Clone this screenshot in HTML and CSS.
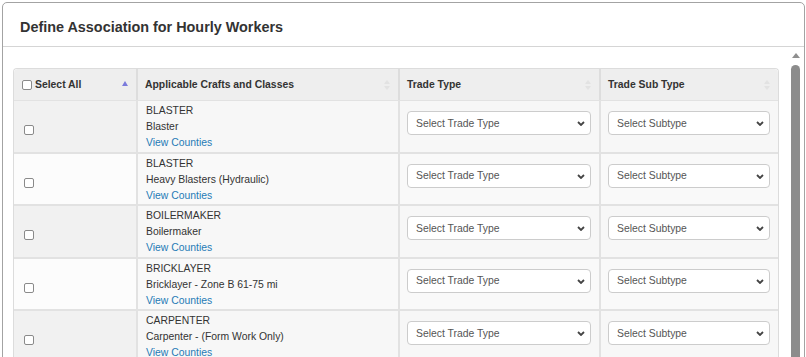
FILE: index.html
```html
<!DOCTYPE html>
<html lang="en">
<head>
<meta charset="utf-8">
<title>Define Association for Hourly Workers</title>
<link rel="stylesheet" href="styles.css">
</head>
<body>
<div class="modal">
  <div class="modal-header">
    <h4 class="modal-title">Define Association for Hourly Workers</h4>
  </div>
  <div class="modal-body">
    <div class="table-wrap">
      <table class="grid">
        <colgroup>
          <col class="c1"><col class="c2"><col class="c3"><col class="c4">
        </colgroup>
        <thead>
          <tr>
            <th><div class="th-inner"><label class="sel-all"><input type="checkbox" class="cb"> Select All</label><span class="sort-asc"></span></div></th>
            <th><div class="th-inner"><span>Applicable Crafts and Classes</span><span class="sort-both"><i class="up"></i><i class="down"></i></span></div></th>
            <th><div class="th-inner"><span>Trade Type</span><span class="sort-both"><i class="up"></i><i class="down"></i></span></div></th>
            <th><div class="th-inner"><span>Trade Sub Type</span><span class="sort-both"><i class="up"></i><i class="down"></i></span></div></th>
          </tr>
        </thead>
        <tbody>
          <tr class="odd">
            <td class="cb-cell"><input type="checkbox" class="cb"></td>
            <td class="craft"><div>BLASTER</div><div>Blaster</div><a href="#">View Counties</a></td>
            <td class="sel-cell"><div class="select"><select><option>Select Trade Type</option></select><svg viewBox="0 0 8 5" width="8" height="5"><path d="M1 1 L4 4 L7 1" fill="none" stroke="#444" stroke-width="1.8"/></svg></div></td>
            <td class="sel-cell"><div class="select"><select><option>Select Subtype</option></select><svg viewBox="0 0 8 5" width="8" height="5"><path d="M1 1 L4 4 L7 1" fill="none" stroke="#444" stroke-width="1.8"/></svg></div></td>
          </tr>
          <tr class="even">
            <td class="cb-cell"><input type="checkbox" class="cb"></td>
            <td class="craft"><div>BLASTER</div><div>Heavy Blasters (Hydraulic)</div><a href="#">View Counties</a></td>
            <td class="sel-cell"><div class="select"><select><option>Select Trade Type</option></select><svg viewBox="0 0 8 5" width="8" height="5"><path d="M1 1 L4 4 L7 1" fill="none" stroke="#444" stroke-width="1.8"/></svg></div></td>
            <td class="sel-cell"><div class="select"><select><option>Select Subtype</option></select><svg viewBox="0 0 8 5" width="8" height="5"><path d="M1 1 L4 4 L7 1" fill="none" stroke="#444" stroke-width="1.8"/></svg></div></td>
          </tr>
          <tr class="odd">
            <td class="cb-cell"><input type="checkbox" class="cb"></td>
            <td class="craft"><div>BOILERMAKER</div><div>Boilermaker</div><a href="#">View Counties</a></td>
            <td class="sel-cell"><div class="select"><select><option>Select Trade Type</option></select><svg viewBox="0 0 8 5" width="8" height="5"><path d="M1 1 L4 4 L7 1" fill="none" stroke="#444" stroke-width="1.8"/></svg></div></td>
            <td class="sel-cell"><div class="select"><select><option>Select Subtype</option></select><svg viewBox="0 0 8 5" width="8" height="5"><path d="M1 1 L4 4 L7 1" fill="none" stroke="#444" stroke-width="1.8"/></svg></div></td>
          </tr>
          <tr class="even">
            <td class="cb-cell"><input type="checkbox" class="cb"></td>
            <td class="craft"><div>BRICKLAYER</div><div>Bricklayer - Zone B 61-75 mi</div><a href="#">View Counties</a></td>
            <td class="sel-cell"><div class="select"><select><option>Select Trade Type</option></select><svg viewBox="0 0 8 5" width="8" height="5"><path d="M1 1 L4 4 L7 1" fill="none" stroke="#444" stroke-width="1.8"/></svg></div></td>
            <td class="sel-cell"><div class="select"><select><option>Select Subtype</option></select><svg viewBox="0 0 8 5" width="8" height="5"><path d="M1 1 L4 4 L7 1" fill="none" stroke="#444" stroke-width="1.8"/></svg></div></td>
          </tr>
          <tr class="odd">
            <td class="cb-cell"><input type="checkbox" class="cb"></td>
            <td class="craft"><div>CARPENTER</div><div>Carpenter - (Form Work Only)</div><a href="#">View Counties</a></td>
            <td class="sel-cell"><div class="select"><select><option>Select Trade Type</option></select><svg viewBox="0 0 8 5" width="8" height="5"><path d="M1 1 L4 4 L7 1" fill="none" stroke="#444" stroke-width="1.8"/></svg></div></td>
            <td class="sel-cell"><div class="select"><select><option>Select Subtype</option></select><svg viewBox="0 0 8 5" width="8" height="5"><path d="M1 1 L4 4 L7 1" fill="none" stroke="#444" stroke-width="1.8"/></svg></div></td>
          </tr>
        </tbody>
      </table>
    </div>
    <div class="vscroll">
      <div class="vs-arrow"></div>
      <div class="vs-thumb"></div>
    </div>
  </div>
</div>
</body>
</html>
```

FILE: styles.css
```css
html, body {
  margin: 0;
  padding: 0;
  height: 100%;
  overflow: hidden;
  background: #fff;
}
body {
  font-family: "Liberation Sans", Arial, sans-serif;
  color: #333;
}
.modal {
  margin: 2px 1px 0 2px;
  border: 1px solid #a3a3a3;
  border-radius: 5px 5px 0 0;
  height: 420px;
  box-sizing: border-box;
  overflow: hidden;
}
.modal-header {
  padding: 14px 17px 9px;
  border-bottom: 1px solid #d5d5d5;
}
.modal-title {
  margin: 0;
  font-size: 14.4px;
  line-height: 20px;
  font-weight: bold;
  color: #333;
}
.modal-body {
  display: flex;
  padding: 0 0 0 10px;
}
.table-wrap {
  flex: 1 1 auto;
  margin-right: 8px;
  padding-top: 21px;
}
.grid {
  width: 100%;
  border-collapse: separate;
  border-spacing: 0;
  table-layout: fixed;
  font-size: 10.4px;
  border: 1px solid #dcdcdc;
  border-bottom: 0;
  border-radius: 4px 4px 0 0;
}
.c1 { width: 122px; }
.c2 { width: 262px; }
.c3 { width: 201px; }
.c4 { width: auto; }
.grid th {
  background: #eeeeee;
  text-align: left;
  font-weight: bold;
  padding: 8px 7px 8px 7px;
  line-height: 15px;
  border-left: 2px solid #dddddd;
  color: #333;
}
.grid th:first-child { border-left: 0; padding-left: 8px; border-top-left-radius: 4px; }
.grid th:last-child { border-top-right-radius: 4px; }
.th-inner {
  display: flex;
  align-items: center;
  justify-content: space-between;
}
.sel-all {
  display: flex;
  align-items: center;
  gap: 3px;
}
.sort-asc {
  width: 0;
  height: 0;
  border-left: 3px solid transparent;
  border-right: 3px solid transparent;
  border-bottom: 5px solid #7b7bdc;
  margin-right: 1px;
  margin-top: -3px;
}
.sort-both {
  display: flex;
  flex-direction: column;
  gap: 2px;
  margin-right: 1px;
}
.sort-both i {
  display: block;
  width: 0;
  height: 0;
  border-left: 3px solid transparent;
  border-right: 3px solid transparent;
}
.sort-both .up { border-bottom: 4px solid #e2e2e2; }
.sort-both .down { border-top: 4px solid #e2e2e2; }
.grid td {
  border-top: 2px solid #e2e2e2;
  border-left: 2px solid #e2e2e2;
  vertical-align: top;
}
.grid td:first-child { border-left: 0; }
.grid tbody tr:first-child td { border-top: 1px solid #e2e2e2; }
.grid tr.odd td { background: #f7f7f7; }
.grid tr.odd td:first-child { background: #f1f1f1; }
.grid tr.even td { background: #f9f9f9; }
.grid tr.even td:first-child { background: #fcfcfc; }
.cb {
  appearance: none;
  -webkit-appearance: none;
  width: 10px;
  height: 10px;
  margin: 0;
  border: 1px solid #8a8a8a;
  border-radius: 2px;
  background: #fff;
  box-sizing: border-box;
}
.cb-cell {
  padding: 24px 0 0 10px;
}
.cb-cell .cb { display: block; }
.craft {
  padding: 2px 8px 0.5px 8px;
  line-height: 16px;
  color: #333;
}
.craft a {
  color: #1f7bb6;
  text-decoration: none;
}
.sel-cell {
  padding: 10px 8px 0 7px;
}
.select {
  position: relative;
}
.select select {
  appearance: none;
  -webkit-appearance: none;
  width: 100%;
  height: 24px;
  border: 1px solid #cccccc;
  border-radius: 4px;
  background: #fff;
  font-family: "Liberation Sans", Arial, sans-serif;
  font-size: 10.4px;
  color: #555;
  padding: 0 20px 0 8px;
  margin: 0;
  display: block;
}
.select svg {
  position: absolute;
  right: 6px;
  top: 10px;
  pointer-events: none;
}
.vscroll {
  flex: 0 0 17px;
  display: flex;
  flex-direction: column;
  align-items: center;
}
.vs-arrow {
  margin-top: 6px;
  width: 0;
  height: 0;
  border-left: 4px solid transparent;
  border-right: 4px solid transparent;
  border-bottom: 5px solid #8f8f8f;
}
.vs-thumb {
  margin-top: 7px;
  width: 9px;
  height: 400px;
  background: #8c8c8c;
  border-radius: 5px 5px 0 0;
}
```
